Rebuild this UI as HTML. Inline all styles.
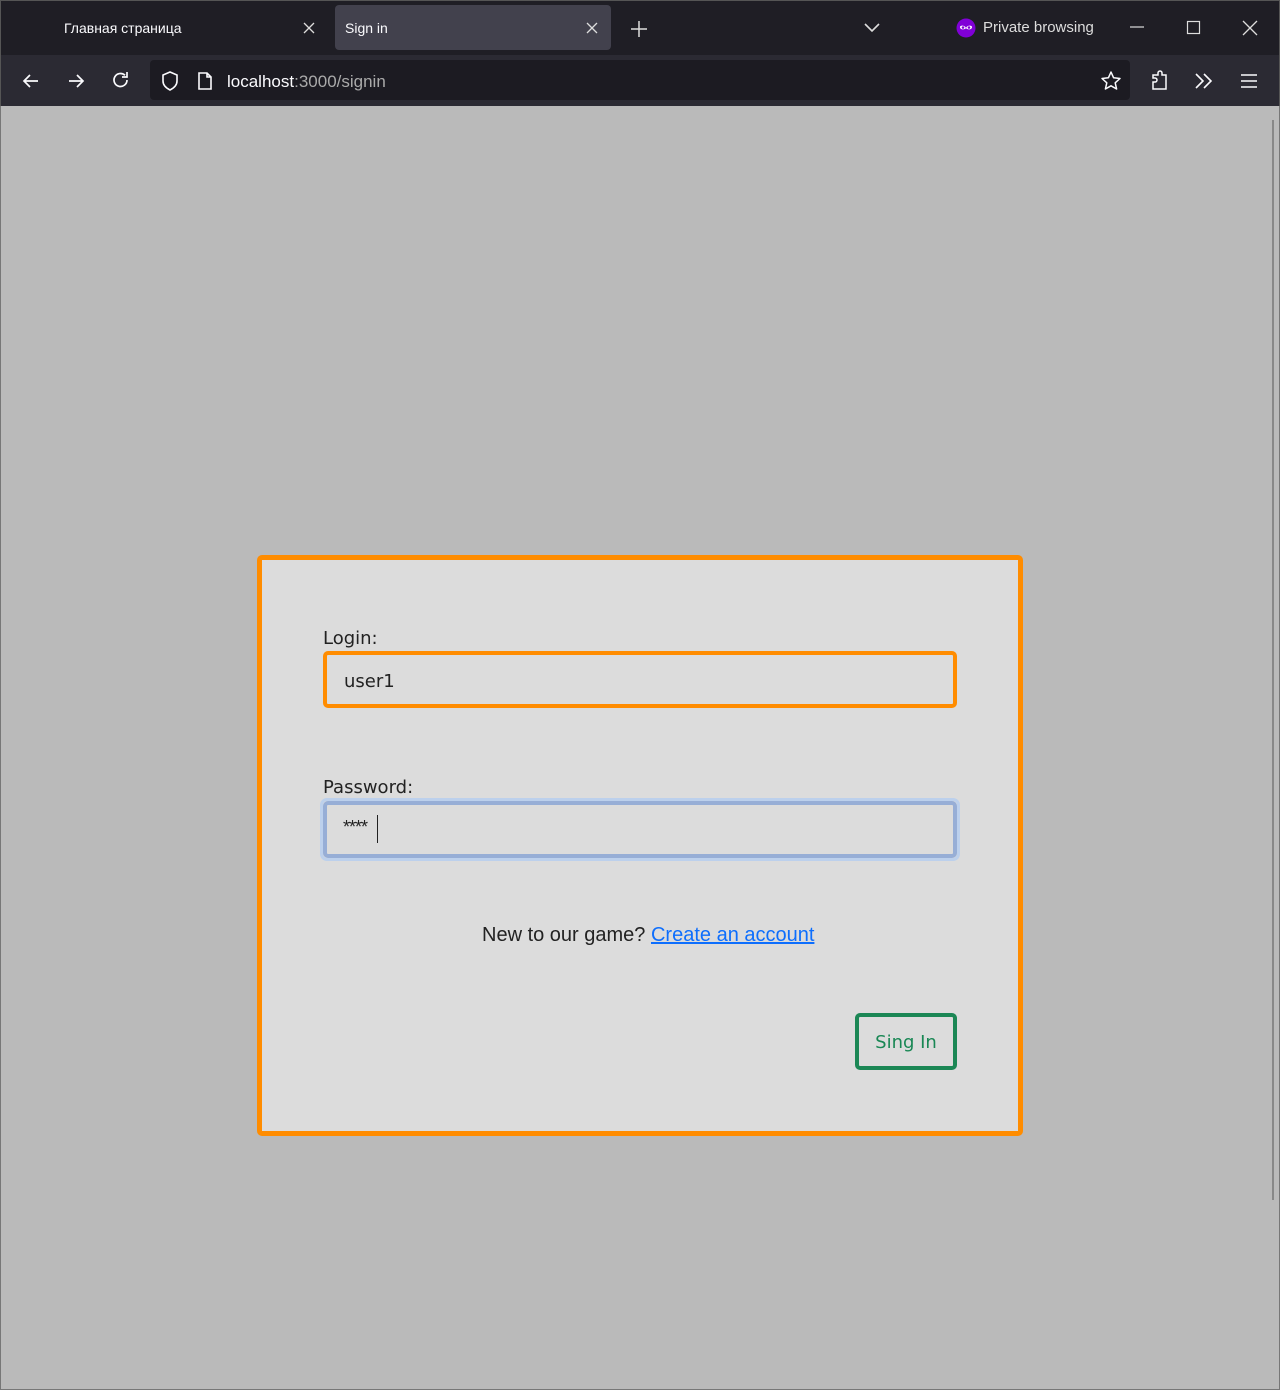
<!DOCTYPE html>
<html><head><meta charset="utf-8"><style>
*{box-sizing:border-box;margin:0;padding:0}
body{width:1280px;height:1390px;background:#bababa;font-family:"Liberation Sans","DejaVu Sans",sans-serif;position:relative;overflow:hidden}
.abs{position:absolute}
.tabbar{left:0;top:0;width:1280px;height:55px;background:#1f1e25;border:1px solid #555;border-bottom:none}
.nav{left:0;top:55px;width:1280px;height:51px;background:#2b2a33;border-left:1px solid #555;border-right:1px solid #555}
.t{color:#fbfbfe;font-size:14px}
svg{position:absolute}
.frame{left:0;top:106px;width:1280px;height:1284px;border:1px solid #777;border-top:none}
</style></head><body>
<div class="abs tabbar"></div>
<div class="abs t" style="left:64px;top:20px">Главная страница</div>
<svg style="left:302px;top:21px" width="14" height="14" viewBox="0 0 14 14"><path d="M2 2L12 12M12 2L2 12" stroke="#ddd" stroke-width="1.3"/></svg>
<div class="abs" style="left:335px;top:5px;width:276px;height:45px;background:#42414d;border-radius:4px"></div>
<div class="abs t" style="left:345px;top:20px">Sign in</div>
<svg style="left:585px;top:21px" width="14" height="14" viewBox="0 0 14 14"><path d="M2 2L12 12M12 2L2 12" stroke="#ddd" stroke-width="1.3"/></svg>
<svg style="left:630px;top:20px" width="18" height="18" viewBox="0 0 18 18"><path d="M9 1V17M1 9H17" stroke="#ddd" stroke-width="1.5"/></svg>
<svg style="left:863px;top:20px" width="18" height="14" viewBox="0 0 18 14"><path d="M2 4L9 11L16 4" stroke="#ddd" stroke-width="1.6" fill="none"/></svg>
<svg style="left:956px;top:18px" width="20" height="20" viewBox="0 0 20 20"><circle cx="10" cy="10" r="9.5" fill="#8000d7"/><path d="M4 9c0-2 5-2 6 1c1-3 6-3 6-1c0 3-5 3-6 1c-1 2-6 2-6-1z" fill="#fff"/><circle cx="7" cy="9.5" r="1.3" fill="#8000d7"/><circle cx="13" cy="9.5" r="1.3" fill="#8000d7"/></svg>
<div class="abs t" style="left:983px;top:19px;color:#ddd;font-size:15px">Private browsing</div>
<svg style="left:1129px;top:20px" width="16" height="16" viewBox="0 0 16 16"><path d="M1 7H15" stroke="#ddd" stroke-width="1.2"/></svg>
<svg style="left:1186px;top:20px" width="16" height="16" viewBox="0 0 16 16"><rect x="1.5" y="1.5" width="12" height="12" stroke="#ddd" stroke-width="1.2" fill="none"/></svg>
<svg style="left:1242px;top:20px" width="16" height="16" viewBox="0 0 16 16"><path d="M1 1L15 15M15 1L1 15" stroke="#ddd" stroke-width="1.3"/></svg>
<div class="abs nav"></div>
<svg style="left:20px;top:70px" width="22" height="22" viewBox="0 0 22 22"><path d="M18 11H4M10 5L4 11L10 17" stroke="#fbfbfe" stroke-width="1.7" fill="none"/></svg>
<svg style="left:65px;top:70px" width="22" height="22" viewBox="0 0 22 22"><path d="M4 11H18M12 5L18 11L12 17" stroke="#fbfbfe" stroke-width="1.7" fill="none"/></svg>
<svg style="left:110px;top:69px" width="22" height="22" viewBox="0 0 22 22"><path d="M17 11a6.5 6.5 0 1 1-2-4.7" stroke="#fbfbfe" stroke-width="1.7" fill="none"/><path d="M17 3V8H12" stroke="#fbfbfe" stroke-width="1.7" fill="none"/></svg>
<div class="abs" style="left:150px;top:60px;width:980px;height:40px;background:#1c1b22;border-radius:4px"></div>
<svg style="left:160px;top:70px" width="20" height="22" viewBox="0 0 20 22"><path d="M10 2L17 5V11C17 15 14 18 10 20C6 18 3 15 3 11V5Z" stroke="#fbfbfe" stroke-width="1.6" fill="none"/></svg>
<svg style="left:196px;top:71px" width="18" height="20" viewBox="0 0 18 20"><path d="M3 2H11L15 6V18H3Z M11 2V6H15" stroke="#fbfbfe" stroke-width="1.6" fill="none"/></svg>
<div class="abs" style="left:227px;top:72px;font-size:17px;color:#fbfbfe">localhost<span style="color:#aaa">:3000/signin</span></div>
<svg style="left:1100px;top:70px" width="22" height="22" viewBox="0 0 22 22"><path d="M11 2L13.6 7.8L20 8.5L15.2 12.8L16.6 19L11 15.8L5.4 19L6.8 12.8L2 8.5L8.4 7.8Z" stroke="#fbfbfe" stroke-width="1.5" fill="none" stroke-linejoin="round"/></svg>
<svg style="left:1149px;top:69px" width="22" height="22" viewBox="0 0 22 22"><path d="M4 20V13H6a2 2 0 0 0 0-4H4V6H9V4a2 2 0 0 1 4 0V6H17V20Z" stroke="#fbfbfe" stroke-width="1.5" fill="none"/></svg>
<svg style="left:1193px;top:71px" width="22" height="20" viewBox="0 0 22 20"><path d="M3 3L10 10L3 17M11 3L18 10L11 17" stroke="#fbfbfe" stroke-width="1.6" fill="none"/></svg>
<svg style="left:1239px;top:71px" width="20" height="20" viewBox="0 0 20 20"><path d="M2 4H18M2 10H18M2 16H18" stroke="#fbfbfe" stroke-width="1.6"/></svg>
<div class="abs frame"></div>
<div class="abs" style="left:1272px;top:120px;width:2px;height:1080px;background:#888"></div>

<div class="abs" style="left:257px;top:555px;width:766px;height:581px;background:#dcdcdc;border:5px solid #ff8c00;border-radius:5px"></div>
<div class="abs" style="left:323px;top:628px;color:#222;font-family:'DejaVu Sans','Liberation Sans',sans-serif;font-size:18px">Login:</div>
<div class="abs" style="left:323px;top:651px;width:634px;height:57px;border:4px solid #ff8c00;border-radius:5px"></div>
<div class="abs" style="left:344px;top:671px;font-size:18px;color:#222;font-family:'DejaVu Sans','Liberation Sans',sans-serif">user1</div>
<div class="abs" style="left:323px;top:777px;font-size:18px;color:#222;font-family:'DejaVu Sans','Liberation Sans',sans-serif">Password:</div>
<div class="abs" style="left:320px;top:798px;width:640px;height:63px;border:3px solid #bcd0ec;border-radius:7px"></div>
<div class="abs" style="left:323px;top:801px;width:634px;height:57px;border:4px solid #97aed6;border-radius:5px"></div>
<div class="abs" style="left:343px;top:817px;font-size:18px;color:#222;letter-spacing:-1px">****</div>
<div class="abs" style="left:377px;top:815px;width:1px;height:28px;background:#222"></div>
<div class="abs" style="left:482px;top:924px;font-size:20px;color:#222">New to our game? <span style="color:#0d6efd;text-decoration:underline">Create an account</span></div>
<div class="abs" style="left:855px;top:1013px;width:102px;height:57px;border:4px solid #1b8755;border-radius:5px;color:#198754;font-size:18px;font-family:'DejaVu Sans','Liberation Sans',sans-serif;text-align:center;line-height:51px">Sing In</div>
</body></html>
